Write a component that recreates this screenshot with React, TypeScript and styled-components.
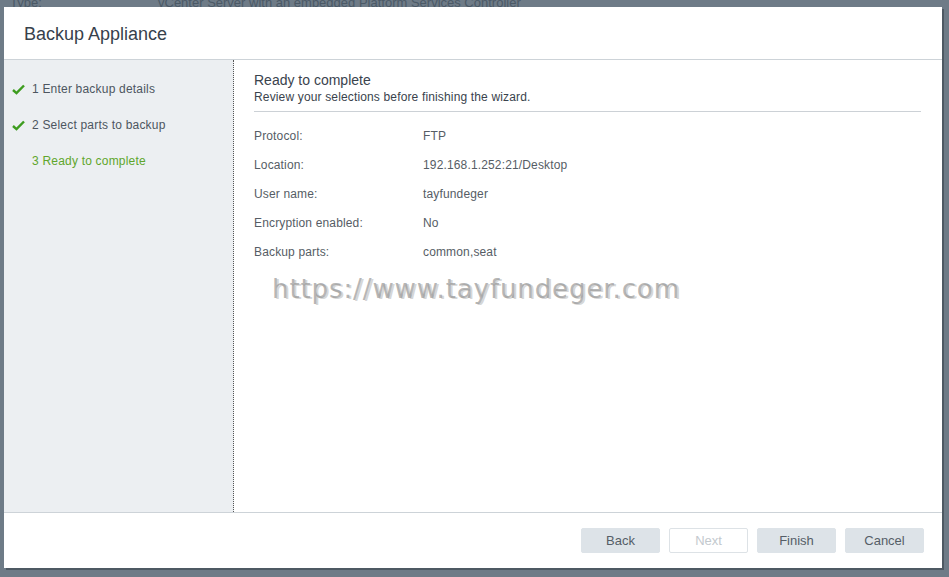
import styled, { createGlobalStyle } from 'styled-components';

const GlobalStyle = createGlobalStyle`
  html, body {
    margin: 0;
    padding: 0;
    background: #6e7b87;
    font-family: "Liberation Sans", Arial, sans-serif;
  }
  #root {
    width: 949px;
    height: 577px;
    position: relative;
    overflow: hidden;
  }
`;

const BackPage = styled.div`
  display: flex;
  margin-top: -5px;
  font-size: 13px;
  color: #4b5966;
`;
const BackLabel = styled.span`
  width: 158px;
  padding-left: 10px;
  box-sizing: border-box;
`;

const Modal = styled.div`
  position: absolute;
  left: 4px;
  top: 7px;
  width: 938px;
  height: 561px;
  background: #fff;
  display: flex;
  flex-direction: column;
  box-shadow: 2px 2px 0 rgba(40, 48, 56, 0.45);
`;

const Header = styled.div`
  height: 53px;
  border-bottom: 1px solid #cdd3d8;
  display: flex;
  align-items: center;
  padding: 3px 0 0 20px;
  box-sizing: border-box;
  flex-shrink: 0;
`;
const Title = styled.h2`
  margin: 0;
  font-weight: normal;
  font-size: 18px;
  color: #37414c;
`;

const Body = styled.div`
  flex: 1;
  display: flex;
  min-height: 0;
`;

const Sidebar = styled.ul`
  width: 230px;
  margin: 0;
  padding: 22px 0 0 8px;
  box-sizing: border-box;
  list-style: none;
  background: #eceff2;
  border-right: 1px dotted #555;
  display: flex;
  flex-direction: column;
  gap: 22px;
`;
const Step = styled.li<{ $active?: boolean }>`
  display: flex;
  align-items: center;
  height: 14px;
  font-size: 12px;
  letter-spacing: 0.2px;
  color: ${(p) => (p.$active ? '#5fa62c' : '#4d5660')};
`;
const CheckSlot = styled.span`
  width: 20px;
  display: flex;
  align-items: center;
`;

const Content = styled.div`
  flex: 1;
  padding: 11px 21px 0 20px;
`;
const SectionTitle = styled.div`
  font-size: 14px;
  color: #3a434d;
  line-height: 18px;
`;
const SectionSub = styled.div`
  font-size: 12px;
  letter-spacing: 0.15px;
  color: #3a434d;
  line-height: 16px;
  padding-bottom: 6px;
  border-bottom: 1px solid #ccd1d6;
`;
const Rows = styled.div`
  display: grid;
  grid-template-columns: 169px 1fr;
  row-gap: 15px;
  padding-top: 17px;
  font-size: 12px;
  letter-spacing: 0.15px;
  line-height: 14px;
  color: #565d65;
`;

const Watermark = styled.div`
  margin-top: 15px;
  margin-left: 18px;
  font-family: "DejaVu Sans", "Liberation Sans", sans-serif;
  font-size: 26px;
  letter-spacing: 0.9px;
  color: rgba(150, 150, 150, 0.7);
  text-shadow: 2px 1px 0 rgba(180, 180, 180, 0.55);
`;

const Footer = styled.div`
  height: 55px;
  border-top: 1px solid #cdd3d8;
  display: flex;
  justify-content: flex-end;
  align-items: center;
  gap: 9px;
  padding-right: 18px;
  flex-shrink: 0;
`;
const Button = styled.button<{ $disabled?: boolean }>`
  width: 79px;
  height: 25px;
  font-family: inherit;
  font-size: 13px;
  border-radius: 2px;
  border: 1px solid ${(p) => (p.$disabled ? '#dde2e6' : '#dde3e8')};
  background: ${(p) => (p.$disabled ? '#fff' : '#dde3e8')};
  color: ${(p) => (p.$disabled ? '#c3c9ce' : '#555e67')};
`;

const Check = () => (
  <svg width="13" height="11" viewBox="0 0 13 11">
    <path d="M1 6 L4.5 9.2 L12 1.5" fill="none" stroke="#3d9c1f" strokeWidth="2.4" />
  </svg>
);

const steps = [
  { label: '1 Enter backup details', done: true },
  { label: '2 Select parts to backup', done: true },
  { label: '3 Ready to complete', done: false },
];

const summary: [string, string][] = [
  ['Protocol:', 'FTP'],
  ['Location:', '192.168.1.252:21/Desktop'],
  ['User name:', 'tayfundeger'],
  ['Encryption enabled:', 'No'],
  ['Backup parts:', 'common,seat'],
];

export default function App() {
  return (
    <>
      <GlobalStyle />
      <BackPage>
        <BackLabel>Type:</BackLabel>
        <span>vCenter Server with an embedded Platform Services Controller</span>
      </BackPage>
      <Modal>
        <Header>
          <Title>Backup Appliance</Title>
        </Header>
        <Body>
          <Sidebar>
            {steps.map((s) => (
              <Step key={s.label} $active={!s.done}>
                <CheckSlot>{s.done && <Check />}</CheckSlot>
                {s.label}
              </Step>
            ))}
          </Sidebar>
          <Content>
            <SectionTitle>Ready to complete</SectionTitle>
            <SectionSub>Review your selections before finishing the wizard.</SectionSub>
            <Rows>
              {summary.map(([k, v]) => (
                <>
                  <span key={k}>{k}</span>
                  <span key={k + 'v'}>{v}</span>
                </>
              ))}
            </Rows>
            <Watermark>https://www.tayfundeger.com</Watermark>
          </Content>
        </Body>
        <Footer>
          <Button>Back</Button>
          <Button $disabled>Next</Button>
          <Button>Finish</Button>
          <Button>Cancel</Button>
        </Footer>
      </Modal>
    </>
  );
}
